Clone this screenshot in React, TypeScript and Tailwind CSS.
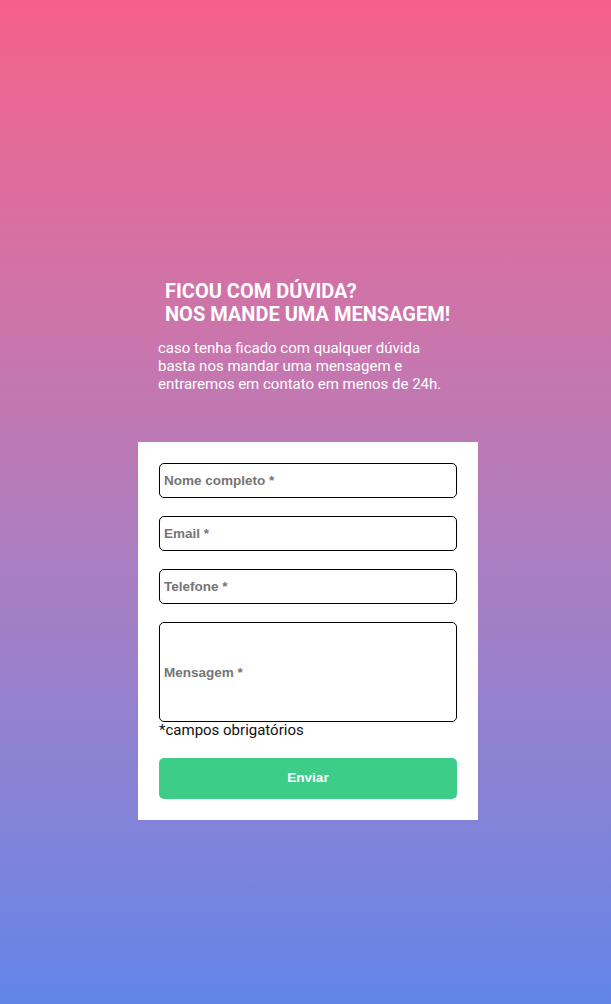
export default function App() {
  return (
    <div className="min-h-[1004px] w-full bg-gradient-to-b from-[#f5608a] to-[#6085e9] font-['Roboto',sans-serif]">
      <div className="ml-[138px] w-[340px] pt-[280px]">
        <h2 className="ml-[27px] text-[20px] font-bold leading-[23px] text-white">
          FICOU COM DÚVIDA?
          <br />
          NOS MANDE UMA MENSAGEM!
        </h2>
        <p className="ml-[20px] mt-[13px] w-[300px] text-[15px] leading-[18px] text-white">
          caso tenha ficado com qualquer dúvida basta nos mandar uma mensagem e entraremos em contato em menos de 24h.
        </p>

        <form
          className="mt-[49px] flex flex-col bg-white px-[21px] pb-[21px] pt-[21px]"
          onSubmit={(e) => e.preventDefault()}
        >
          <Field placeholder="Nome completo *" />
          <Field placeholder="Email *" />
          <Field placeholder="Telefone *" />
          <input
            placeholder="Mensagem *"
            className="h-[100px] w-full rounded-[5px] border border-black px-[4px] font-['Liberation_Sans',sans-serif] text-[13.5px] font-bold placeholder:text-[#757575] outline-none"
          />
          <span className="text-[15px] leading-[17px] text-[#111]">*campos obrigatórios</span>
          <button
            type="submit"
            className="mt-[19px] h-[41px] w-full rounded-[5px] bg-[#3dcd89] font-['Liberation_Sans',sans-serif] text-[13.5px] font-bold text-white"
          >
            Enviar
          </button>
        </form>
      </div>
    </div>
  );
}

const Field = ({ placeholder }: { placeholder: string }) => {
  return (
    <input
      placeholder={placeholder}
      className="mb-[18px] h-[35px] w-full rounded-[5px] border border-black px-[4px] font-['Liberation_Sans',sans-serif] text-[13.5px] font-bold placeholder:text-[#757575] outline-none"
    />
  );
};
